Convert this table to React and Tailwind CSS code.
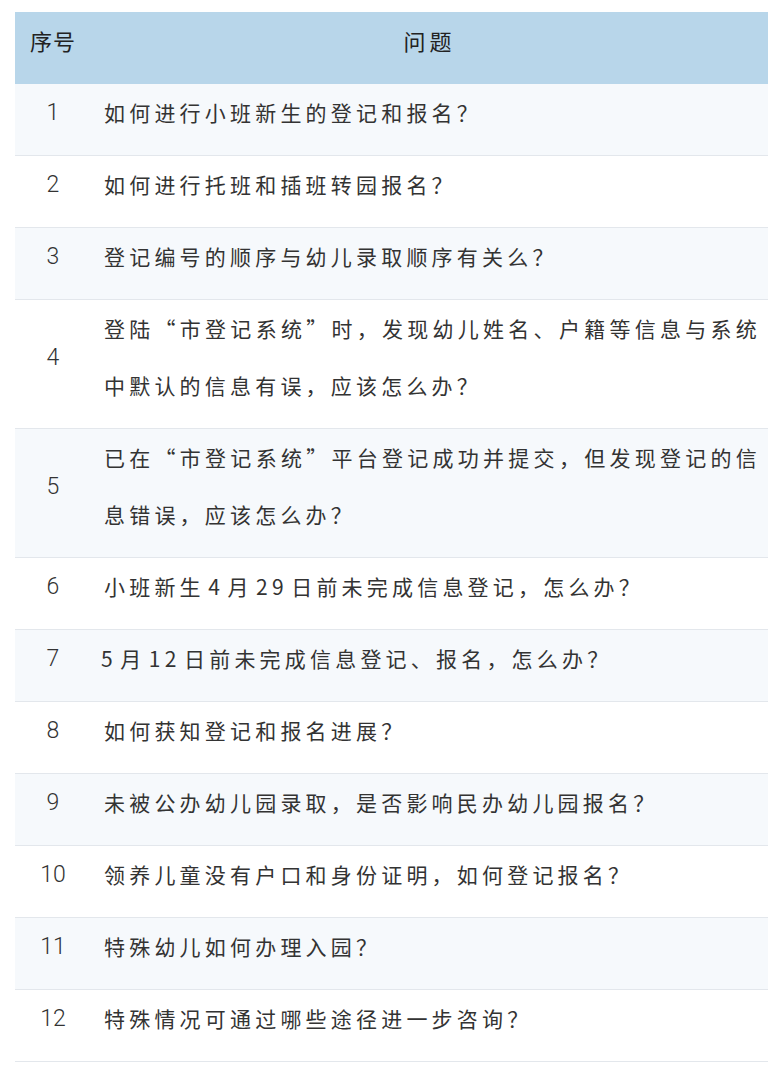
const questions = [
  { no: 1, lines: ['如何进行小班新生的登记和报名？'] },
  { no: 2, lines: ['如何进行托班和插班转园报名？'] },
  { no: 3, lines: ['登记编号的顺序与幼儿录取顺序有关么？'] },
  { no: 4, lines: ['登陆“市登记系统”时，发现幼儿姓名、户籍等信息与系统', '中默认的信息有误，应该怎么办？'] },
  { no: 5, lines: ['已在“市登记系统”平台登记成功并提交，但发现登记的信', '息错误，应该怎么办？'] },
  { no: 6, lines: ['小班新生 4 月 29 日前未完成信息登记，怎么办？'] },
  { no: 7, lines: ['5 月 12 日前未完成信息登记、报名，怎么办？'], shift: true },
  { no: 8, lines: ['如何获知登记和报名进展？'] },
  { no: 9, lines: ['未被公办幼儿园录取，是否影响民办幼儿园报名？'] },
  { no: 10, lines: ['领养儿童没有户口和身份证明，如何登记报名？'] },
  { no: 11, lines: ['特殊幼儿如何办理入园？'] },
  { no: 12, lines: ['特殊情况可通过哪些途径进一步咨询？'] },
];

const cjk = "font-['Noto_Sans_CJK_SC',sans-serif]";

function Row({ q }) {
  const shaded = q.no % 2 === 1;
  return (
    <div
      className={`flex pb-[14px] border-b border-[#e3e7ec] ${shaded ? 'bg-[#f6f9fc]' : 'bg-white'}`}
    >
      <div className="w-[76px] shrink-0 flex items-center justify-center font-['Roboto',sans-serif] font-light text-[23px] text-[#333] leading-[57px]">
        {q.no}
      </div>
      <div
        className={`flex-1 pr-[7px] ${q.shift ? 'pl-[10px]' : 'pl-[13px]'} ${cjk} text-[21px] leading-[57px] tracking-[4.2px] [word-spacing:-5.5px] text-[#333]`}
      >
        {q.lines.map((line, i) => (
          <div
            key={i}
            className={i < q.lines.length - 1 ? 'text-justify [text-align-last:justify]' : ''}
          >
            {line}
          </div>
        ))}
      </div>
    </div>
  );
}

export default function App() {
  return (
    <div className="min-h-screen bg-white pt-3 pl-[15px]">
      <div className="w-[753px]">
        <div className={`flex h-[72px] pb-[15px] bg-[#b8d6ea] ${cjk} text-[22px] text-[#222] leading-[57px]`}>
          <div className="w-[76px] shrink-0 text-center tracking-[1px]">序号</div>
          <div className="flex-1 text-center tracking-[4px]">问题</div>
        </div>
        {questions.map(q => (
          <Row key={q.no} q={q} />
        ))}
      </div>
    </div>
  );
}
